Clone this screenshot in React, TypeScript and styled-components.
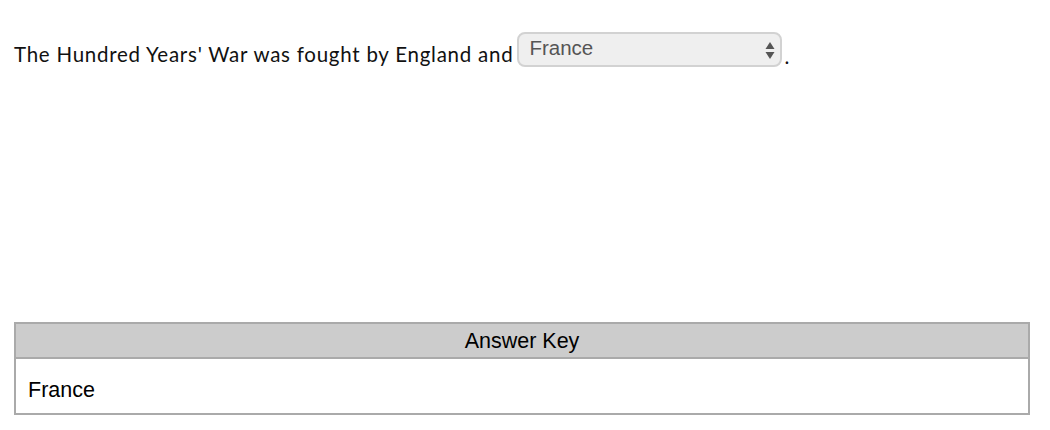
import styled, { createGlobalStyle } from "styled-components";

const GlobalStyle = createGlobalStyle`
  html, body {
    margin: 0;
    padding: 0;
    background: #fff;
  }
`;

const Page = styled.div`
  width: 1050px;
  height: 430px;
  padding: 32px 20px 0 14px;
  box-sizing: border-box;
  display: flex;
  flex-direction: column;
`;

const Sentence = styled.p`
  margin: 0;
  font-family: Lato, "Open Sans", sans-serif;
  font-size: 20.5px;
  letter-spacing: 0.75px;
  color: #111;
  display: flex;
  align-items: flex-start;
  line-height: 1;
`;

const Words = styled.span`
  padding-top: 12px;
`;

const Dropdown = styled.div`
  position: relative;
  margin-left: 4px;
  width: 265px;
  height: 35px;
  box-sizing: border-box;
  border: 2px solid #d2d2d2;
  border-radius: 8px;
  background: #efefef;
  display: flex;
  align-items: center;
  padding: 0 0 2px 10px;
  font-family: "Liberation Sans", Arial, sans-serif;
  font-size: 20.5px;
  letter-spacing: 0;
  color: #555;
`;

const Arrows = styled.svg`
  position: absolute;
  right: 5px;
  top: 7px;
`;

const Period = styled.span`
  padding-top: 14px;
  margin-left: 2px;
`;

const AnswerKey = styled.div`
  margin-top: 255px;
  width: 1016px;
  box-sizing: border-box;
  border: 2px solid #aaa;
  font-family: "Liberation Sans", Arial, sans-serif;
  font-size: 21.5px;
  color: #000;
`;

const KeyHeader = styled.div`
  height: 31px;
  background: #cccccc;
  border-bottom: 2px solid #aaa;
  display: flex;
  align-items: center;
  justify-content: center;
  padding-top: 2px;
  box-sizing: content-box;
`;

const KeyBody = styled.div`
  height: 54px;
  box-sizing: border-box;
  padding: 21px 0 0 12px;
  line-height: 1;
`;

export default function App() {
  return (
    <>
      <GlobalStyle />
      <Page>
        <Sentence>
          <Words>The Hundred Years' War was fought by England and</Words>
          <Dropdown>
            France
            <Arrows width="10" height="19" viewBox="0 0 10 19">
              <path d="M5 1 L9.5 8 L0.5 8 Z" fill="#555" />
              <path d="M5 18 L9.5 11 L0.5 11 Z" fill="#555" />
            </Arrows>
          </Dropdown>
          <Period>.</Period>
        </Sentence>
        <AnswerKey>
          <KeyHeader>Answer Key</KeyHeader>
          <KeyBody>France</KeyBody>
        </AnswerKey>
      </Page>
    </>
  );
}
